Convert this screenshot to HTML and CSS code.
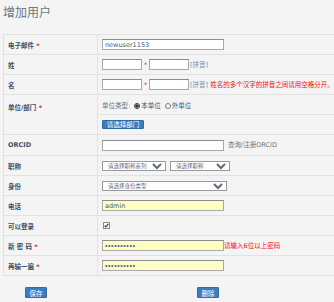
FILE: index.html
```html
<!DOCTYPE html>
<html lang="zh">
<head>
<meta charset="utf-8">
<title>增加用户</title>
<link rel="stylesheet" href="styles.css">
</head>
<body>
<div class="page">
  <h1 class="title">增加用户</h1>
  <table class="form">
    <tr>
      <th>电子邮件 <span class="req">*</span></th>
      <td><input class="txt w-long" type="text" value="newuser1153"></td>
    </tr>
    <tr>
      <th>姓</th>
      <td class="inline"><input class="txt w-short" type="text"><span class="req star">*</span><input class="txt w-short" type="text"><span class="hint">[拼音]</span></td>
    </tr>
    <tr>
      <th>名</th>
      <td class="inline"><input class="txt w-short" type="text"><span class="req star">*</span><input class="txt w-short" type="text"><span class="hint">[拼音]</span> <span class="warn">姓名的多个汉字的拼音之间请用空格分开。</span></td>
    </tr>
    <tr>
      <th rowspan="2" class="top">单位/部门 <span class="req">*</span></th>
      <td class="inline"><span class="muted">单位类型:</span><label class="opt"><input type="radio" name="t" checked>本单位</label><label class="opt"><input type="radio" name="t">外单位</label></td>
    </tr>
    <tr>
      <td><button class="btn small">请选择部门</button></td>
    </tr>
    <tr class="tall">
      <th>ORCID</th>
      <td class="inline"><input class="txt w-long" type="text"><span class="muted link">查询/注册ORCID</span></td>
    </tr>
    <tr>
      <th>职称</th>
      <td class="inline"><select class="sel w-sel1"><option>请选择职称系列</option></select><select class="sel w-sel2"><option>请选择职称</option></select></td>
    </tr>
    <tr>
      <th>身份</th>
      <td><select class="sel w-sel3"><option>请选择身份类型</option></select></td>
    </tr>
    <tr>
      <th>电话</th>
      <td><input class="txt w-long filled" type="text" value="admin"></td>
    </tr>
    <tr>
      <th>可以登录</th>
      <td><span class="chk" role="checkbox" aria-checked="true"><svg width="7" height="7" viewBox="0 0 7 7"><rect x="0.5" y="0.5" width="6" height="6" fill="#fff" stroke="#8a8a8a"/><path d="M1.6 3.6 L2.9 4.9 L5.4 1.9" fill="none" stroke="#333" stroke-width="1.1"/></svg></span></td>
    </tr>
    <tr>
      <th>新 密 码 <span class="req">*</span></th>
      <td class="inline"><input class="txt w-long filled pw" type="password" value="1234567890"><span class="warn">请输入6位以上密码</span></td>
    </tr>
    <tr>
      <th>再输一遍 <span class="req">*</span></th>
      <td><input class="txt w-long filled pw" type="password" value="1234567890"></td>
    </tr>
  </table>
  <div class="actions">
    <button class="btn">保存</button>
    <button class="btn del">删除</button>
  </div>
</div>
</body>
</html>
```

FILE: styles.css
```css
html, body {
  margin: 0;
  padding: 0;
  overflow: hidden;
  background: #f4f4f4;
}
body {
  font-family: "DejaVu Sans", "Noto Sans CJK SC", sans-serif;
  font-size: 6.5px;
  color: #4a5870;
}
.page {
  padding: 2px 0 0 3px;
  width: 345px;
}
.title {
  margin: 0 0 12px 0;
  font-family: "Noto Sans CJK SC", sans-serif;
  font-weight: normal;
  font-size: 12px;
  line-height: 20px;
  color: #6b7684;
}
.form {
  border-collapse: collapse;
  width: 345px;
}
.form th, .form td {
  border: 1px solid #e2e2e2;
  height: 20px;
  padding: 0 4px;
  box-sizing: border-box;
}
.form th {
  width: 94px;
  text-align: left;
  font-weight: bold;
  color: #3f5068;
  vertical-align: middle;
}
.form th.top {
  vertical-align: top;
  padding-top: 7px;
}
.form td {
  vertical-align: middle;
}
.form tr.tall td, .form tr.tall th {
  height: 21px;
}
.inline {
  white-space: nowrap;
}
.req {
  color: #e02020;
}
.star {
  display: inline-block;
  width: 7px;
  text-align: center;
}
.txt {
  box-sizing: border-box;
  height: 11px;
  border: 1px solid #a8a8a8;
  border-top-color: #8c8c8c;
  background: #fff;
  padding: 0 2px;
  margin: 0;
  font: inherit;
  font-size: 6.5px;
  color: #4a5870;
  vertical-align: middle;
  outline: none;
}
.pw {
  color: #4a6090;
  letter-spacing: 0.6px;
  font-family: "Liberation Sans", sans-serif;
  font-size: 7px;
}
.w-long { width: 122px; }
.w-short { width: 40px; }
.filled { background: #ffffc4; }
.hint {
  color: #7d8fb0;
  margin-left: 1px;
}
.warn {
  color: #ee1111;
}
.muted {
  color: #6a7686;
}
.link {
  margin-left: 4px;
}
.opt {
  margin-left: 4px;
  color: #4a5870;
}
.opt input {
  width: 6px;
  height: 6px;
  margin: 0 1px 0 0;
  vertical-align: -1px;
  accent-color: #333;
}
.sel {
  box-sizing: border-box;
  height: 10px;
  border: 1px solid #9a9a9a;
  background: #fff;
  font: inherit;
  font-size: 5.5px;
  padding: 0 1px;
  margin: 0;
  color: #5a6a82;
  vertical-align: middle;
}
.w-sel1 { width: 64px; margin-right: 4px; }
.w-sel2 { width: 60px; }
.w-sel3 { width: 125px; }
.chk {
  display: inline-block;
  width: 7px;
  height: 7px;
  margin-left: 1px;
  vertical-align: middle;
}
.chk svg {
  display: block;
}
.btn {
  background: #3a7dc0;
  color: #fff;
  border: 1px solid #2f6aa6;
  border-radius: 1px;
  font-family: "Noto Sans CJK SC", sans-serif;
  font-size: 6.5px;
  line-height: 8px;
  height: 11px;
  width: 22px;
  padding: 0;
  margin: 0;
}
.btn.small {
  width: 42px;
  height: 9px;
  line-height: 7px;
}
.actions {
  display: flex;
  padding: 11px 0 0 22px;
}
.btn.del {
  margin-left: 150px;
}
```
